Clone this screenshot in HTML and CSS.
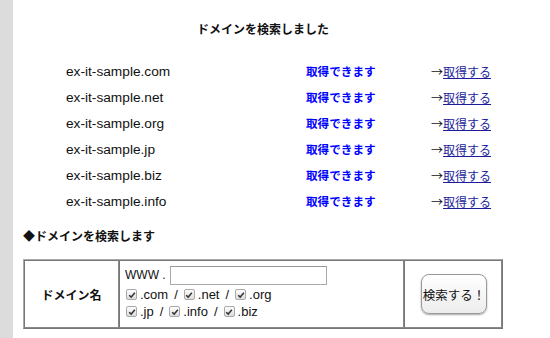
FILE: index.html
```html
<!DOCTYPE html>
<html lang="ja">
<head>
    <meta charset="UTF-8">
    <title>ドメイン検索</title>
    <link rel="stylesheet" href="styles.css">
</head>
<body>
    <div class="page">
        <div class="side"></div>
        <main class="content">
            <h1 class="result-title">ドメインを検索しました</h1>
            <div class="result-list">
                <div class="domain">ex-it-sample.com</div><div class="status">取得できます</div><div class="action"><span class="arrow">→</span><a href="#">取得する</a></div>
                <div class="domain">ex-it-sample.net</div><div class="status">取得できます</div><div class="action"><span class="arrow">→</span><a href="#">取得する</a></div>
                <div class="domain">ex-it-sample.org</div><div class="status">取得できます</div><div class="action"><span class="arrow">→</span><a href="#">取得する</a></div>
                <div class="domain">ex-it-sample.jp</div><div class="status">取得できます</div><div class="action"><span class="arrow">→</span><a href="#">取得する</a></div>
                <div class="domain">ex-it-sample.biz</div><div class="status">取得できます</div><div class="action"><span class="arrow">→</span><a href="#">取得する</a></div>
                <div class="domain">ex-it-sample.info</div><div class="status">取得できます</div><div class="action"><span class="arrow">→</span><a href="#">取得する</a></div>
            </div>

            <h2 class="search-title">◆ドメインを検索します</h2>
            <form class="search-form">
                <table class="search-table">
                    <tr>
                        <th class="label-cell">ドメイン名</th>
                        <td class="input-cell">
                            <div class="www-row">WWW . <input type="text" class="domain-input"></div>
                            <div class="tld-row">
                                <label><span class="check"><svg viewBox="0 0 10 10" width="8" height="8"><path d="M1.5 5.2 L4 7.6 L8.6 2.2" fill="none" stroke="#333" stroke-width="1.8"/></svg></span>.com</label><span>/</span>
                                <label><span class="check"><svg viewBox="0 0 10 10" width="8" height="8"><path d="M1.5 5.2 L4 7.6 L8.6 2.2" fill="none" stroke="#333" stroke-width="1.8"/></svg></span>.net</label><span>/</span>
                                <label><span class="check"><svg viewBox="0 0 10 10" width="8" height="8"><path d="M1.5 5.2 L4 7.6 L8.6 2.2" fill="none" stroke="#333" stroke-width="1.8"/></svg></span>.org</label>
                            </div>
                            <div class="tld-row">
                                <label><span class="check"><svg viewBox="0 0 10 10" width="8" height="8"><path d="M1.5 5.2 L4 7.6 L8.6 2.2" fill="none" stroke="#333" stroke-width="1.8"/></svg></span>.jp</label><span>/</span>
                                <label><span class="check"><svg viewBox="0 0 10 10" width="8" height="8"><path d="M1.5 5.2 L4 7.6 L8.6 2.2" fill="none" stroke="#333" stroke-width="1.8"/></svg></span>.info</label><span>/</span>
                                <label><span class="check"><svg viewBox="0 0 10 10" width="8" height="8"><path d="M1.5 5.2 L4 7.6 L8.6 2.2" fill="none" stroke="#333" stroke-width="1.8"/></svg></span>.biz</label>
                            </div>
                        </td>
                        <td class="button-cell"><button type="submit" class="search-button">検索する！</button></td>
                    </tr>
                </table>
            </form>
        </main>
    </div>
</body>
</html>
```

FILE: styles.css
```css
/* page */
body {
    margin: 0;
    font-family: "Liberation Sans", "Noto Sans CJK JP", sans-serif;
    color: #111;
    background-color: #fff;
}

.page {
    display: flex;
    min-height: 338px;
}

.side {
    width: 13px;
    background-color: #dcdcdc;
    flex-shrink: 0;
}

.content {
    flex: 1;
    padding-left: 10px;
}

/* result list */
.result-title {
    margin: 21px 0 0 0;
    width: 480px;
    text-align: center;
    font-size: 12px;
    font-weight: bold;
    line-height: 18px;
}

.result-list {
    display: grid;
    grid-template-columns: 240px 125px auto;
    grid-auto-rows: 26px;
    align-items: center;
    margin: 19px 0 0 43px;
}

.domain {
    font-size: 13.7px;
}

.status {
    font-size: 11.6px;
    font-weight: bold;
    color: #0000ff;
}

.action {
    font-size: 12px;
}

.arrow {
    font-family: "Noto Sans CJK JP", sans-serif;
}

.action a {
    color: #1c1c9a;
}

/* search form */
.search-title {
    margin: 14px 0 0 0;
    font-size: 12px;
    font-weight: bold;
    line-height: 18px;
}

.search-form {
    margin-top: 13px;
}

.search-table {
    width: 480px;
    height: 70px;
    border-collapse: separate;
    border-spacing: 0;
    border: 1px solid #aaa;
    border-right-color: #777;
    border-bottom-color: #777;
    table-layout: fixed;
}

.search-table th,
.search-table td {
    border: 1px solid #888;
    border-top-color: #777;
    border-left-color: #777;
    padding: 0;
}

.label-cell {
    width: 93px;
    font-size: 12px;
    font-weight: bold;
}

.input-cell {
    padding: 3px 5px 2px 5px !important;
    vertical-align: top;
}

.button-cell {
    width: 96px;
    text-align: center;
}

.www-row {
    display: flex;
    align-items: center;
    gap: 4px;
    height: 22px;
    font-size: 12px;
}

.domain-input {
    width: 157px;
    height: 19px;
    box-sizing: border-box;
    border: 1px solid #aaa;
    border-top-color: #999;
    margin: 0;
    padding: 0 3px;
}

.tld-row {
    display: flex;
    align-items: center;
    gap: 6px;
    height: 17px;
    padding-left: 1px;
    font-size: 13px;
}

.tld-row label {
    display: flex;
    align-items: center;
    gap: 3px;
}

.check {
    display: inline-flex;
    align-items: center;
    justify-content: center;
    width: 9px;
    height: 9px;
    border: 1px solid #aaa;
    border-radius: 2px;
    background: linear-gradient(#fdfdfd, #dcdcdc);
}

.search-button {
    width: 66px;
    height: 40px;
    margin-left: 2px;
    padding: 0;
    white-space: nowrap;
    font-family: "Liberation Sans", "Noto Sans CJK JP", sans-serif;
    font-size: 12.5px;
    color: #111;
    border: 1px solid #999;
    border-radius: 8px;
    background: linear-gradient(#fff, #ececec);
    box-shadow: 0 1px 2px rgba(0, 0, 0, 0.35);
}
```
